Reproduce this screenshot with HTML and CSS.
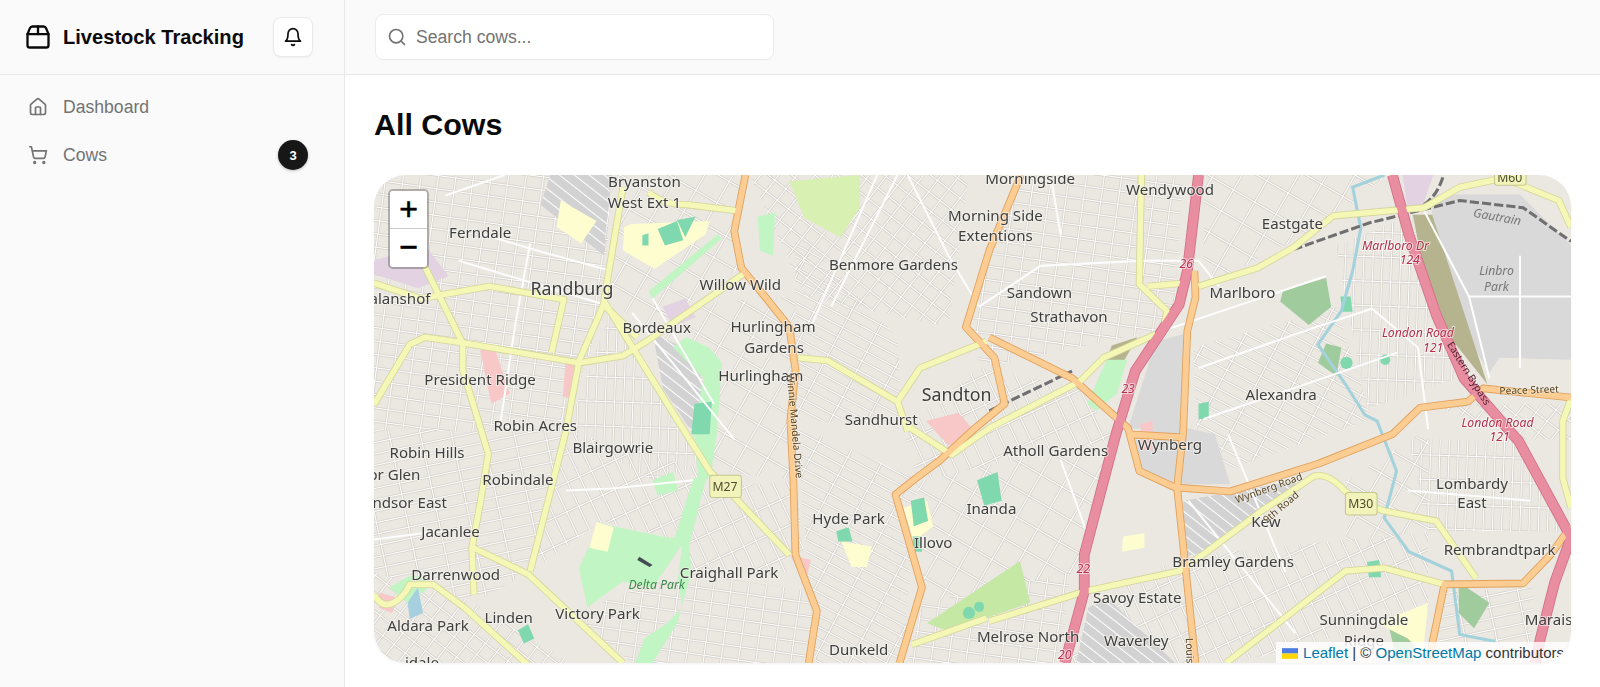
FILE: index.html
```html
<!DOCTYPE html>
<html lang="en">
<head>
<meta charset="utf-8">
<title>Livestock Tracking</title>
<link rel="stylesheet" href="styles.css">
</head>
<body>
<div class="app">
  <aside class="sidebar">
    <div class="brand">
      <svg class="brand-icon" viewBox="0 0 24 24" fill="none" stroke="currentColor" stroke-width="2" stroke-linecap="round" stroke-linejoin="round"><path d="M3 9.5 5 4.6A2.5 2.5 0 0 1 7.3 3h9.4A2.5 2.5 0 0 1 19 4.6l2 4.9"/><path d="M3 9.5h18V19a2 2 0 0 1-2 2H5a2 2 0 0 1-2-2z"/><path d="M12 3v6.500"/></svg>
      <span class="brand-name">Livestock Tracking</span>
      <button class="bell" type="button" aria-label="Notifications">
        <svg viewBox="0 0 24 24" fill="none" stroke="currentColor" stroke-width="2" stroke-linecap="round" stroke-linejoin="round"><path d="M6 8a6 6 0 0 1 12 0c0 7 3 9 3 9H3s3-2 3-9"/><path d="M10.300 21a1.940 1.940 0 0 0 3.400 0"/></svg>
      </button>
    </div>
    <nav class="nav">
      <a class="nav-item">
        <svg viewBox="0 0 24 24" fill="none" stroke="currentColor" stroke-width="2" stroke-linecap="round" stroke-linejoin="round"><path d="M15 21v-8a1 1 0 0 0-1-1h-4a1 1 0 0 0-1 1v8"/><path d="M3 10a2 2 0 0 1 .7-1.500l7-6a2 2 0 0 1 2.600 0l7 6A2 2 0 0 1 21 10v9a2 2 0 0 1-2 2H5a2 2 0 0 1-2-2z"/></svg>
        <span>Dashboard</span>
      </a>
      <a class="nav-item">
        <svg viewBox="0 0 24 24" fill="none" stroke="currentColor" stroke-width="2" stroke-linecap="round" stroke-linejoin="round"><circle cx="8" cy="21" r="1"/><circle cx="19" cy="21" r="1"/><path d="M2.050 2.050h2l2.660 12.420a2 2 0 0 0 2 1.580h9.780a2 2 0 0 0 1.950-1.570l1.650-7.430H5.120"/></svg>
        <span>Cows</span>
        <b class="badge">3</b>
      </a>
    </nav>
  </aside>
  <div class="main">
    <header class="topbar">
      <label class="search">
        <svg viewBox="0 0 24 24" fill="none" stroke="currentColor" stroke-width="2" stroke-linecap="round" stroke-linejoin="round"><circle cx="11" cy="11" r="8"/><path d="m21 21-4.300-4.300"/></svg>
        <span>Search cows...</span>
      </label>
    </header>
    <main class="content">
      <h1>All Cows</h1>
      <section class="map">
        <svg class="tiles" viewBox="367 171 1173 478" preserveAspectRatio="none" aria-label="Map of northern Johannesburg">
          <defs>
            <pattern id="s1" width="17" height="13" patternUnits="userSpaceOnUse" patternTransform="rotate(8)"><path class="pc" d="M0 6h17M8 0v13"/><path class="pw" d="M0 6h17M8 0v13"/></pattern>
            <pattern id="s2" width="11" height="30" patternUnits="userSpaceOnUse" patternTransform="rotate(78)"><path class="pc" d="M0 15h11M5 0v30"/><path class="pw" d="M0 15h11M5 0v30"/></pattern>
            <pattern id="s3" width="10" height="32" patternUnits="userSpaceOnUse" patternTransform="rotate(-62)"><path class="pc" d="M0 16h10M5 0v32"/><path class="pw" d="M0 16h10M5 0v32"/></pattern>
            <pattern id="s4" width="13" height="26" patternUnits="userSpaceOnUse" patternTransform="rotate(-25)"><path class="pc" d="M0 13h13M6 0v26"/><path class="pw" d="M0 13h13M6 0v26"/></pattern>
            <pattern id="s5" width="14" height="14" patternUnits="userSpaceOnUse" patternTransform="rotate(38)"><path class="pc" d="M0 7h14M7 0v14"/><path class="pw" d="M0 7h14M7 0v14"/></pattern>
            <pattern id="s6" width="9" height="24" patternUnits="userSpaceOnUse" patternTransform="rotate(2)"><path class="pc" d="M0 12h9M4 0v24"/><path class="pw" d="M0 12h9M4 0v24"/></pattern>
            <pattern id="s7" width="24" height="24" patternUnits="userSpaceOnUse" patternTransform="rotate(30)"><path class="pc" d="M0 12h24M12 0v24"/><path class="pw" d="M0 12h24M12 0v24"/></pattern>
            <pattern id="g1" width="30" height="9" patternUnits="userSpaceOnUse" patternTransform="rotate(38)"><rect width="30" height="9" class="gb"/><path class="pw" d="M0 4h30"/></pattern>
            <g id="yellow">
              <path d="M367 277 413 292 480 280 553 293 541 345"/>
              <path d="M367 396 402 337 417 330 452 335 568 355 611 348 634 334 729 268"/>
              <path d="M592 294 665 412 696 461 774 543"/>
              <path d="M611 183 595 278 592 298 568 353 555 422 520 559"/>
              <path d="M592 298 625 330"/>
              <path d="M673 200 723 206M636 188Q650 200 673 200"/>
              <path d="M417 261 454 336 454 362 479 444 471 493 463 536 465 582"/>
              <path d="M464 536 518 562 611 649"/>
              <path d="M367 582Q375 596 386 590T402 572H425L456 595 518 651"/>
              <path d="M783 350 812 353 880 393 890 422"/>
              <path d="M880 393 902 360 967 334"/>
              <path d="M890 417 933 445 970 419 1059 373 1082 350 1133 327"/>
              <path d="M1119 171 1117 278 1144 304 1140 324"/>
              <path d="M1125 280 1160 277M1175 280 1233 262 1268 242 1307 211 1396 203 1431 183 1474 174 1528 196 1540 222"/>
              <path d="M970 608 1063 579 1156 559 1179 543 1237 500 1288 466Q1302 462 1319 481L1334 492 1357 500 1408 510 1447 566"/>
              <path d="M1202 649 1319 559 1357 556 1416 572"/>
              <path d="M894 631 967 605"/>
              <path d="M1540 390 1532 412 1532 468 1540 497"/>
            </g>
            <g id="orange">
              <path d="M731 171 720 226 727 262 750 290 774 320 780 362 775 412 778 470 780 543 801 598 793 649"/>
              <path d="M882 649 904 575 878 484 898 468 921 451 956 419 985 395 975 350 947 320 970 245 1001 171"/>
              <path d="M970 330 1051 370 1106 419 1117 461 1152 477 1206 481 1292 454 1365 425 1392 399 1439 393 1454 380 1540 389"/>
              <path d="M1106 425 1160 428"/>
              <path d="M1171 265 1172 291 1164 324 1160 422 1154 477 1172 649"/>
              <path d="M1400 649 1416 572 1493 571 1520 543 1540 515"/>
            </g>
            <g id="pink">
              <path d="M1175 171 1164 265 1156 298 1113 363 1094 425 1063 543 1063 579 1044 649"/>
              <path d="M1365 171 1381 229 1408 308 1435 370 1489 432 1540 526 1524 570 1510 625 1505 649"/>
            </g>
          </defs>

          <rect class="land" x="367" y="171" width="1173" height="478"/>

          <g class="residential">
            <path fill="url(#s1)" d="M367 171H600L592 298 555 422H367Z"/>
            <path fill="url(#s2)" d="M367 420H558L520 560 465 590 367 560Z"/>
            <path fill="url(#s6)" d="M600 300 690 455 640 470 556 422Z"/>
            <path fill="url(#s4)" d="M555 422 690 460 670 530 590 510 520 560Z"/>
            <path fill="url(#s5)" d="M367 560 465 590 560 649H367Z"/>
            <path fill="url(#s7)" d="M600 171H730L725 262 640 320 600 300Z"/>
            <path fill="url(#s3)" d="M780 225 880 330 885 420 780 410Z"/>
            <path fill="url(#s7)" d="M640 300 780 290 780 470 690 460Z"/>
            <path fill="url(#s5)" d="M735 171H950L930 320 790 290Z"/>
            <path fill="url(#s3)" d="M780 415 900 470 885 649H800Z"/>
            <path fill="url(#s1)" d="M560 600 670 560 800 580 795 649H620Z"/>
            <path fill="url(#s4)" d="M685 480 780 470 790 560 670 560Z"/>
            <path fill="url(#s7)" d="M900 470 1090 430 1060 560 905 590Z"/>
            <path fill="url(#s1)" d="M1000 171H1160L1150 320 960 360 950 300Z"/>
            <path fill="url(#s7)" d="M1180 171H1360L1300 220 1180 280Z"/>
            <path fill="url(#s3)" d="M1170 340 1310 300 1345 410 1175 470Z"/>
            <path fill="url(#s6)" d="M1310 240 1385 210 1430 370 1340 400Z"/>
            <path fill="url(#s6)" d="M1380 430 1490 430 1540 520 1400 520Z"/>
            <path fill="url(#s4)" d="M1070 590 1160 545 1400 520 1400 600 1210 649H1050Z"/>
            <path fill="url(#s7)" d="M1320 470 1400 420 1400 520 1320 530Z"/>
            <path fill="url(#s2)" d="M1410 580 1505 575 1500 649H1410Z"/>
            <path fill="url(#s4)" d="M960 360 1060 380 1092 430 900 470 885 420Z"/>
            <path fill="url(#s1)" d="M905 590 1050 560 1040 649H890Z"/>
            <path fill="url(#s5)" d="M1400 395 1540 395 1540 430 1490 430Z"/>
          </g>

          <path fill="url(#g1)" d="M540 171H600L592 250 530 200Z"/>
          <path fill="url(#g1)" d="M640 325 680 345 698 400 690 440 650 380Z"/>
          <g class="grey">
            <path d="M1106 419 1133 334 1160 327 1160 422Z"/>
            <path d="M1110 422 1117 458 1152 474 1206 474 1191 425 1160 418Z"/>
            <path d="M1404 190H1490L1540 240V352L1470 350 1460 365 1445 340 1404 225Z"/>
          </g>
          <path fill="url(#g1)" d="M1160 490 1245 475 1285 470 1180 540 1160 545Z"/>
          <path fill="url(#g1)" d="M1067 595 1086 585 1152 649H1055Z"/>
          <path class="olive" d="M1385 210 1404 210 1458 376 1447 362 1404 308Z"/>
          <path class="olive" d="M1090 338 1115 330 1098 360 1085 352Z"/>

          <g class="park">
            <path d="M588 512 654 526 669 533 665 566 669 595 654 610 632 625 623 649H640L664 610 678 560 676 533 692 470 697 465 680 468 662 526 654 526Z"/>
            <path d="M588 512 568 556 576 595 611 569 640 575 669 533 654 526Z"/>
            <path d="M673 330 695 340 708 355 703 425 697 465 685 468 680 420 690 370 660 340Z"/>
            <path d="M636 285 704 229 708 233 640 292Z"/>
            <path d="M1085 352 1105 352 1095 385 1075 402 1066 395Z"/>
            <path d="M743 212 760 208 758 250 745 245Z"/>
            <path d="M382 575 405 562 425 572 400 590Z"/>
            <path d="M640 470 660 462 665 480 645 485Z"/>
          </g>
          <path class="meadow" d="M774 177 843 171 843 203 824 232 789 213Z"/>
          <path class="golf" d="M909 610 1000 549 1010 590 930 618Z"/>
          <path class="forest" d="M1258 284 1300 272 1305 300 1283 318 1255 295Z"/>
          <path class="forest" d="M1300 336 1315 340 1310 368 1292 355Z"/>
          <path class="forest" d="M1360 607 1388 618 1385 649H1370Z"/>
          <path class="forest" d="M1430 570 1460 590 1445 615 1430 600Z"/>

          <g class="school">
            <path d="M619 219 696 216 692 229 642 263 611 245 612 222Z"/>
            <path d="M550 196 585 216 570 238 546 222Z"/>
            <path d="M585 511 602 516 596 540 578 536Z"/>
            <path d="M1350 610 1400 590 1395 640 1380 625Z"/>
            <path d="M825 530 855 535 850 555 835 555Z"/>
            <path d="M886 497 909 490 915 515 896 530Z"/>
            <path d="M1101 525 1122 522 1122 536 1100 540Z"/>
          </g>
          <g class="pitch">
            <path d="M645 224 664 216 670 235 652 240Z"/>
            <path d="M664 215 682 212 672 232Z"/>
            <path d="M630 230 636 228 636 240 630 240Z"/>
            <path d="M681 395 698 393 696 425 678 425Z"/>
            <path d="M958 470 978 462 982 490 965 495Z"/>
            <path d="M893 490 906 487 910 510 896 515Z"/>
            <path d="M895 525 904 525 904 540 895 540Z"/>
            <path d="M820 520 832 516 836 530 822 530Z"/>
            <path d="M1175 395 1185 393 1185 410 1175 410Z"/>
            <path d="M1314 290 1324 290 1326 305 1316 305Z"/>
            <path d="M508 617 518 611 524 625 514 630Z"/>
            <path d="M1340 550 1352 548 1354 565 1342 565Z"/>
            <circle cx="1320" cy="355" r="6"/>
            <circle cx="1358" cy="352" r="5"/>
            <circle cx="950" cy="600" r="6"/>
            <circle cx="960" cy="594" r="5"/>
          </g>
          <g class="commercial">
            <path d="M471 343 485 340 500 385 482 395Z"/>
            <path d="M908 412 940 404 958 425 930 436Z"/>
            <path d="M555 350 565 352 560 390 552 388Z"/>
            <path d="M1118 415 1130 412 1130 440 1120 440Z"/>
            <path d="M372 580 390 585 385 600 372 595Z"/>
            <path d="M782 545 795 548 790 570Z"/>
          </g>
          <g class="civic">
            <path d="M367 255 417 240 440 270 410 282 367 268Z"/>
            <path d="M650 300 672 292 682 310 660 320Z"/>
            <path d="M1375 171H1405L1395 200 1380 205Z"/>
          </g>
          <path class="river" d="M1357 171 1326 183 1334 223 1326 265 1315 304 1292 337 1319 376 1338 406 1350 412 1369 461 1357 507 1381 540 1423 559 1431 621 1466 628"/>
          <path class="lake" d="M627 545 640 553 637 555 625 548Z"/>
          <path class="pond" d="M400 590 410 575 415 600 402 606Z"/>

          <g class="minor">
            <path d="M437 191 495 171M470 228 530 246 600 265M450 255 600 300M620 306 720 430M520 238 505 320 490 420"/>
            <path d="M555 480 600 478 680 470M640 292 700 395"/>
            <path d="M860 171 795 320M890 171 930 250 960 300"/>
            <path d="M960 300 1020 260 1120 255 1175 255 1195 280"/>
            <path d="M1130 327 1300 270"/>
            <path d="M1175 360 1290 320 1345 302 1390 340 1400 420"/>
            <path d="M1180 410 1370 345"/>
            <path d="M1204 425 1260 560M1165 490 1270 620"/>
            <path d="M1395 204 1440 290 1460 370M1440 290H1540M1490 250V360"/>
            <path d="M367 528 430 520M880 171 815 300M1030 171 1040 230"/>
            <path d="M1380 480 1500 490M1040 450 1065 520"/>
          </g>
          <g class="rail">
            <path d="M1268 244 1342 218 1431 196 1493 203 1540 236"/>
            <path d="M1396 200Q1410 190 1415 171"/>
            <path d="M970 402 1051 363"/>
          </g>

          <use href="#yellow" class="yc"/><use href="#orange" class="oc"/><use href="#pink" class="pkc"/>
          <use href="#yellow" class="yf"/><use href="#orange" class="of"/><use href="#pink" class="pkf"/>

          <g class="labels">
            <text x="632" y="183">Bryanston</text>
            <text x="632" y="203">West Ext 1</text>
            <text x="471" y="233">Ferndale</text>
            <text class="big" x="561" y="289">Randburg</text>
            <text x="387" y="297">Halanshof</text>
            <text x="726" y="284">Willow Wild</text>
            <text x="644" y="326">Bordeaux</text>
            <text x="876" y="264">Benmore Gardens</text>
            <text x="758" y="325">Hurlingham</text>
            <text x="759" y="345">Gardens</text>
            <text x="746" y="373">Hurlingham</text>
            <text x="471" y="377">President Ridge</text>
            <text x="1010" y="180">Morningside</text>
            <text x="1147" y="191">Wendywood</text>
            <text x="976" y="216">Morning Side</text>
            <text x="976" y="236">Extentions</text>
            <text x="1267" y="224">Eastgate</text>
            <text x="1019" y="291">Sandown</text>
            <text x="1048" y="315">Strathavon</text>
            <text x="1218" y="291">Marlboro</text>
            <text class="big" x="938" y="392">Sandton</text>
            <text x="864" y="416">Sandhurst</text>
            <text x="1256" y="391">Alexandra</text>
            <text x="525" y="422">Robin Acres</text>
            <text x="601" y="443">Blairgowrie</text>
            <text x="419" y="448">Robin Hills</text>
            <text x="387" y="470">or Glen</text>
            <text x="508" y="475">Robindale</text>
            <text x="402" y="497">ndsor East</text>
            <text x="442" y="526">Jacanlee</text>
            <text x="447" y="568">Darrenwood</text>
            <text x="499" y="610">Linden</text>
            <text x="420" y="618">Aldara Park</text>
            <text x="586" y="606">Victory Park</text>
            <text x="715" y="566">Craighall Park</text>
            <text x="832" y="513">Hyde Park</text>
            <text x="915" y="536">Illovo</text>
            <text x="972" y="503">Inanda</text>
            <text x="1035" y="446">Atholl Gardens</text>
            <text x="1147" y="440">Wynberg</text>
            <text x="1241" y="516">Kew</text>
            <text x="1209" y="555">Bramley Gardens</text>
            <text x="1115" y="590">Savoy Estate</text>
            <text x="1008" y="628">Melrose North</text>
            <text x="1114" y="632">Waverley</text>
            <text x="842" y="641">Dunkeld</text>
            <text x="1337" y="612">Sunningdale</text>
            <text x="1337" y="632">Ridge</text>
            <text x="1443" y="479">Lombardy</text>
            <text x="1443" y="497">East</text>
            <text x="1470" y="543">Rembrandtpark</text>
            <text x="1518" y="612">Marais</text>
            <text x="414" y="654">idale</text>
          </g>
          <text class="parkname" x="644" y="577">Delta Park</text>
          <g class="motorway">
            <text x="1368" y="244">Marlboro Dr</text>
            <text x="1382" y="258">124</text>
            <text x="1390" y="330">London Road</text>
            <text x="1405" y="344">121</text>
            <text x="1468" y="418">London Road</text>
            <text x="1470" y="432">121</text>
            <text x="1163" y="262">26</text>
            <text x="1106" y="385">23</text>
            <text x="1062" y="561">22</text>
            <text x="1044" y="645">20</text>
          </g>
          <g class="roadname">
            <text transform="translate(1245 481) rotate(-20)">Wynberg Road</text>
            <text transform="translate(1258 499) rotate(-40)">9th Road</text>
            <text transform="translate(1499 385) rotate(-2)">Peace Street</text>
            <text transform="translate(776 417) rotate(85)">Winnie Mandela Drive</text>
            <text transform="translate(1163 637) rotate(88)">Louis</text>
          </g>
          <text class="bypass" transform="translate(1437 367) rotate(58)">Eastern Bypass</text>
          <g class="areaname">
            <text transform="translate(1467 216) rotate(10)">Gautrain</text>
            <text x="1467" y="269">Linbro</text>
            <text x="1467" y="285">Park</text>
          </g>
          <g class="shield">
            <rect x="696" y="465" width="31" height="22" rx="3"/>
            <text x="711" y="481">M27</text>
            <rect x="1319" y="482" width="31" height="22" rx="3"/>
            <text x="1334" y="497">M30</text>
            <rect x="1465" y="163" width="31" height="18" rx="3"/>
            <text x="1480" y="178">M60</text>
          </g>
        </svg>
        <div class="zoom">
          <a class="zoom-btn">+</a>
          <a class="zoom-btn">&#8722;</a>
        </div>
        <div class="attribution">
          <svg class="flag" viewBox="0 0 12 8"><rect width="12" height="4" fill="#4C7BE1"/><rect y="4" width="12" height="4" fill="#FFD500"/></svg>
          <a>Leaflet</a> | © <a>OpenStreetMap</a> contributors
        </div>
      </section>
    </main>
  </div>
</div>
</body>
</html>
```

FILE: styles.css
```css
* { box-sizing: border-box; }
html, body { height: 100%; margin: 0; }
body { font-family: "Liberation Sans", Arial, sans-serif; color: #0a0a0a; background: #fff; overflow: hidden; }
.app { display: flex; height: 687px; }

.sidebar { width: 345px; flex: none; background: #fafafa; border-right: 1px solid #e8e8e8; display: flex; flex-direction: column; }
.brand { height: 75px; flex: none; display: flex; align-items: center; padding: 0 31px 0 24px; border-bottom: 1px solid #e8e8e8; }
.brand-icon { width: 28px; height: 28px; flex: none; color: #0a0a0a; }
.brand-name { margin-left: 11px; font-size: 20.1px; font-weight: 700; flex: 1; white-space: nowrap; }
.bell { width: 40px; height: 40px; flex: none; padding: 0; display: flex; align-items: center; justify-content: center; background: #fff; border: 1px solid #eaeaea; border-radius: 8px; box-shadow: 0 1px 2px rgba(0,0,0,.05); color: #0a0a0a; }
.bell svg { width: 20px; height: 20px; }

.nav { display: flex; flex-direction: column; padding: 8px 32px 0 16px; }
.nav-item { height: 48px; display: flex; align-items: center; color: #737373; font-size: 17.6px; padding-left: 12px; }
.nav-item svg { width: 20px; height: 20px; flex: none; margin-right: 15px; }
.nav-item span { flex: 1; }
.badge { width: 30px; height: 30px; border-radius: 50%; background: #171717; color: #fff; font-size: 13px; display: flex; align-items: center; justify-content: center; box-shadow: 0 1px 3px rgba(0,0,0,.25); margin-right: 4px; }

.main { flex: 1; min-width: 0; display: flex; flex-direction: column; }
.topbar { height: 75px; flex: none; background: #fafafa; border-bottom: 1px solid #e8e8e8; padding: 14px 0 0 30px; }
.search { width: 399px; height: 46px; display: flex; align-items: center; background: #fff; border: 1px solid #ececec; border-radius: 8px; padding: 0 0 0 11px; color: #737373; font-size: 17.6px; box-shadow: 0 1px 1px rgba(0,0,0,.02); }
.search svg { width: 20px; height: 20px; flex: none; margin-right: 9px; }

.content { flex: 1; padding: 29px 29px 0 29px; }
h1 { margin: 0 0 31px; font-size: 30.4px; line-height: 40px; font-weight: 700; color: #0a0a0a; }
.map { position: relative; height: 488px; border-radius: 32px; overflow: hidden; box-shadow: 0 1px 3px rgba(0,0,0,.06); }
.tiles { display: block; width: 100%; height: 100%; filter: blur(.45px); font-family: "Noto Sans", sans-serif; }

.land { fill: #ebe7e1; }
.residential { opacity: 1; }
.pc { stroke: #c6c1ba; stroke-width: 1.9; fill: none; }
.pw { stroke: #fff; stroke-width: 1.05; fill: none; }
.gb { fill: #d3d2d2; }
.grey path { fill: #dad9da; }
.olive { fill: #b5b48e; }
.park path { fill: #c2f5c4; }
.meadow { fill: #d8f0b2; }
.golf { fill: #c5e8a5; }
.forest { fill: #9fcb9d; }
.school path { fill: #fdfdcf; }
.pitch path, .pitch circle { fill: #80d8ae; }
.commercial path { fill: #f8c8c8; }
.civic path { fill: #e2d2e2; }
.river { fill: none; stroke: #a3d2dc; stroke-width: 3; }
.lake { fill: #444c55; }
.pond { fill: #a6cfe0; }
.minor path { fill: none; stroke: #fdfdfd; stroke-width: 2; }
.rail path { fill: none; stroke: #6f6f6f; stroke-width: 3; stroke-dasharray: 9 3; }

.yc { fill: none; stroke: #d4d69a; stroke-width: 7; stroke-linejoin: round; }
.yf { fill: none; stroke: #f5f7b6; stroke-width: 5.4; stroke-linejoin: round; }
.oc { fill: none; stroke: #e0a15c; stroke-width: 7.5; stroke-linejoin: round; }
.of { fill: none; stroke: #fbcd93; stroke-width: 5.8; stroke-linejoin: round; }
.pkc { fill: none; stroke: #d0708a; stroke-width: 10.5; stroke-linejoin: round; }
.pkf { fill: none; stroke: #e88ea0; stroke-width: 8.8; stroke-linejoin: round; }

.labels text { font-size: 14.8px; fill: #3e3e3e; text-anchor: middle; paint-order: stroke; stroke: rgba(245,243,238,.7); stroke-width: 2px; }
.labels .big { font-size: 17.4px; }
.parkname { font-size: 12px; font-style: italic; fill: #3c8a4a; text-anchor: middle; }
.motorway text { font-size: 12px; font-style: italic; fill: #b3304b; text-anchor: middle; paint-order: stroke; stroke: rgba(255,255,255,.6); stroke-width: 2px; }
.roadname text { font-size: 10px; fill: #55421c; text-anchor: middle; paint-order: stroke; stroke: rgba(255,255,255,.45); stroke-width: 1.500px; }
.bypass { font-size: 10px; fill: #55202f; text-anchor: middle; }
.areaname text { font-size: 12px; font-style: italic; fill: #777; text-anchor: middle; }
.shield rect { fill: #f1f3bb; stroke: #c3c68c; stroke-width: 1; }
.shield text { font-size: 12px; fill: #4c4d2e; text-anchor: middle; }

.zoom { position: absolute; left: 14px; top: 14px; width: 41px; border: 2px solid rgba(0,0,0,.25); border-radius: 5px; background-clip: padding-box; }
.zoom-btn { display: block; height: 38px; background: #fff; color: #000; font-family: "Liberation Sans", sans-serif; font-size: 32px; line-height: 37px; font-weight: 400; text-align: center; -webkit-text-stroke: .6px #000; }
.zoom-btn:first-child { border-bottom: 1px solid #ccc; border-radius: 3px 3px 0 0; }
.zoom-btn:last-child { border-radius: 0 0 3px 3px; }

.attribution { position: absolute; right: 0; bottom: 0; height: 21px; padding: 0 7px 0 6px; background: rgba(255,255,255,.82); font-size: 15px; line-height: 21px; color: #333; white-space: nowrap; }
.attribution a { color: #0078a8; }
.flag { width: 16px; height: 11px; margin-right: 1px; vertical-align: -1px; }
```
